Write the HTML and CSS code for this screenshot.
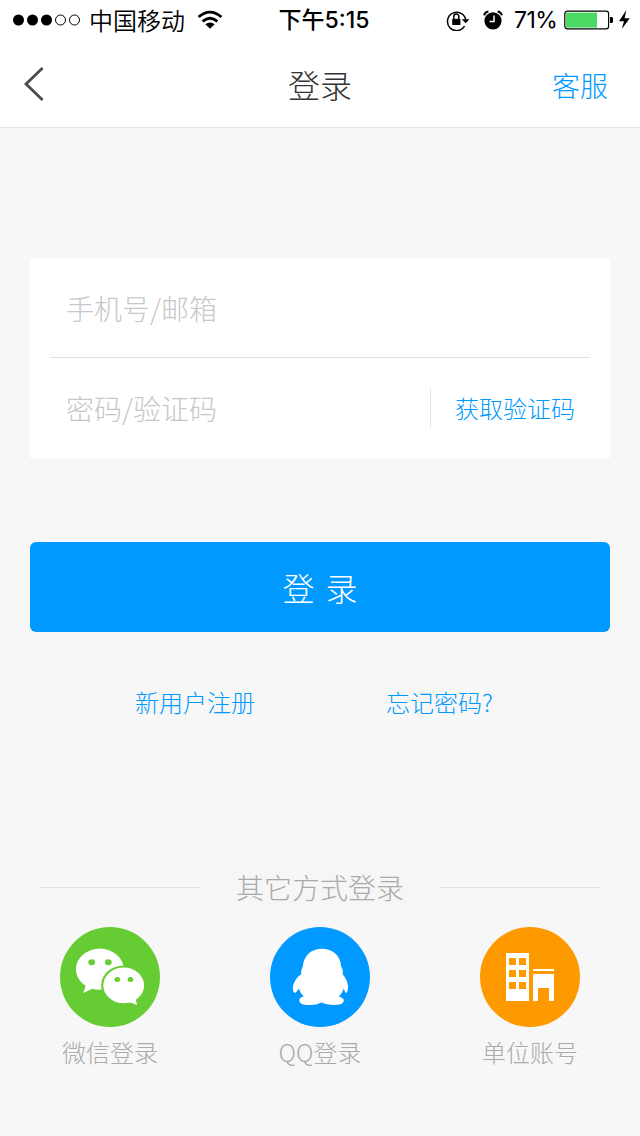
FILE: index.html
```html
<!DOCTYPE html>
<html lang="zh-CN">
    <head>
        <meta charset="utf-8">
        <title>登录</title>
        <link rel="stylesheet" href="styles.css">
    </head>
    <body>
        <div class="statusbar">
            <div class="carrier">
                <svg class="signal" width="70" height="14" viewBox="0 0 70 14">
                    <circle cx="6.5" cy="7" r="5.5" />
                    <circle cx="20.5" cy="7" r="5.5" />
                    <circle cx="34.5" cy="7" r="5.5" />
                    <circle class="off" cx="48.5" cy="7" r="5" />
                    <circle class="off" cx="62.5" cy="7" r="5" />
                </svg>
                <span class="operator">中国移动</span>
                <svg class="wifi" width="26" height="20" viewBox="0 0 26 20">
                    <path class="arc" d="M1.6 7Q13 -2.8 24.4 7M5.6 11.4Q13 5 20.4 11.4" />
                    <path d="M8.3 14.2Q13 10.6 17.7 14.2L13 18.8Z" />
                </svg>
            </div>
            <div class="clock">下午5:15</div>
            <div class="power">
                <svg class="lock" width="24" height="22" viewBox="0 0 24 22">
                    <path class="ring" d="M18.6 17.2A9.2 9.2 0 1 1 19.8 11" />
                    <path d="M15.8 10.2H23.4L19.6 14.2Z" />
                    <path d="M6.2 9.8H14.4V16H6.2Z" />
                    <path class="ring" d="M7.8 10V7.6A2.5 2.6 0 0 1 12.8 7.6V10" />
                </svg>
                <svg class="alarm" width="20" height="20" viewBox="0 0 20 20">
                    <circle cx="10" cy="10.8" r="8.6" />
                    <path class="bell" d="M1.2 5.4Q1.8 2.2 5.4 1.6M18.8 5.4Q18.2 2.2 14.6 1.6" />
                    <path class="hand" d="M11 5.4V11.6H6.6" />
                </svg>
                <span class="percent">71%</span>
                <svg class="battery" width="68" height="22" viewBox="0 0 68 22">
                    <rect class="case" x="0.8" y="2.2" width="43.8" height="17.6" rx="2.6" />
                    <rect class="level" x="2" y="3.6" width="31" height="15" />
                    <path d="M46 8H47.4Q49 8 49 9.4V12.6Q49 14 47.4 14H46Z" />
                    <path d="M62.4 1L55 12.2H60L57.8 20L65.8 9.2H60.6Z" />
                </svg>
            </div>
        </div>
        <div class="navbar">
            <a class="back" href="#">
                <svg width="22" height="36" viewBox="0 0 22 36">
                    <path d="M19.6 2L3 18L19.6 34" />
                </svg>
            </a>
            <div class="title">登录</div>
            <a class="service" href="#">客服</a>
        </div>
        <div class="form">
            <div class="field">
                <span class="placeholder">手机号/邮箱</span>
            </div>
            <div class="field">
                <span class="placeholder">密码/验证码</span>
                <a class="getcode" href="#">获取验证码</a>
            </div>
        </div>
        <a class="submit" href="#">登 录</a>
        <div class="links">
            <a href="#">新用户注册</a>
            <a href="#">忘记密码?</a>
        </div>
        <div class="divider">
            <span>其它方式登录</span>
        </div>
        <div class="others">
            <a class="other" href="#">
                <svg class="wechat" width="100" height="100" viewBox="0 0 100 100">
                    <circle cx="50" cy="50" r="50" />
                    <path class="shape" d="M26 58L23.3 66L33 61.4Z" />
                    <ellipse class="shape" cx="39.8" cy="42.2" rx="23.9" ry="20.6" />
                    <ellipse cx="63.7" cy="58.4" rx="22.6" ry="20" />
                    <ellipse class="shape" cx="63.7" cy="58.4" rx="20.4" ry="17.9" />
                    <path class="shape" d="M69 75L77 78L75.4 71Z" />
                    <ellipse cx="31.7" cy="35.2" rx="3.4" ry="3" />
                    <ellipse cx="48.3" cy="35.2" rx="3.4" ry="3" />
                    <ellipse cx="57.3" cy="52.6" rx="2.8" ry="2.5" />
                    <ellipse cx="70.5" cy="52.6" rx="2.8" ry="2.5" />
                </svg>
                <span>微信登录</span>
            </a>
            <a class="other" href="#">
                <svg class="qq" width="100" height="100" viewBox="0 0 100 100">
                    <circle cx="50" cy="50" r="50" />
                    <path class="shape" d="M51.8 21.8C62 21.8 70.4 28 71.2 39.5Q73.2 42 72.8 47.4C76 51 78 55.5 78 60Q77.8 65 76.4 65.8Q75 66 73.8 61.4Q72.4 66 68.8 69.4Q73.8 70.6 73.8 73.6C73.4 77.4 69 78 64 78Q56 77.6 51.6 75.5Q46 78.4 38.6 78C33 78 29.4 76.8 29.3 73.2Q29.4 70.2 33.8 69.4Q30.2 66 28.7 61.4Q26 66 24.7 65.8C22.4 65 22.8 60 23.4 57.5C24.8 53 27.5 49.5 31 47.4Q30.8 43 32.8 39.5C33.6 28.2 41.8 21.8 51.8 21.8Z" />
                </svg>
                <span>QQ登录</span>
            </a>
            <a class="other" href="#">
                <svg class="company" width="100" height="100" viewBox="0 0 100 100">
                    <circle cx="50" cy="50" r="50" />
                    <path class="shape" d="M26 26H49V74H26ZM53 42H74V44H53ZM53 47H74V74H69V61H58V74H53Z" />
                    <path d="M29 31H36V38H29ZM39 31H46V38H39ZM29 43H36V50H29ZM39 43H46V50H39ZM29 55H36V62H29ZM39 55H46V62H39Z" />
                </svg>
                <span>单位账号</span>
            </a>
        </div>
    </body>
</html>
```
FILE: styles.css
```css
*
{
    box-sizing:border-box;
}
body
{
    margin:0;
    min-height:1136px;
    background:#f7f7f7;
    color:#333;
    font-family:"Noto Sans CJK SC",sans-serif;
    font-weight:300;
}
a
{
    color:#0099ff;
    text-decoration:none;
}
svg
{
    display:block;
    flex:none;
}
.statusbar
{
    display:grid;
    grid-template-columns:240px 168px 1fr;
    height:40px;
    background:#fff;
    color:#000;
    font-size:24px;
    line-height:40px;
    font-weight:400;
}
.carrier
{
    display:flex;
    align-items:center;
    padding-left:12px;
}
.signal .off
{
    fill:none;
    stroke:#000;
}
.operator
{
    margin-left:7px;
    font-weight:350;
}
.wifi
{
    margin-left:12px;
}
.wifi .arc
{
    fill:none;
    stroke:#000;
    stroke-width:2.8;
}
.clock
{
    text-align:center;
    font-family:Inter,"Noto Sans CJK SC",sans-serif;
    font-weight:500;
    font-size:23px;
}
.power
{
    display:flex;
    align-items:center;
    padding-left:38px;
}
.lock .ring
{
    fill:none;
    stroke:#000;
    stroke-width:1.5;
}
.alarm
{
    margin-left:13px;
}
.alarm .bell
{
    fill:none;
    stroke:#000;
    stroke-width:2;
}
.alarm .hand
{
    fill:none;
    stroke:#fff;
    stroke-width:1.5;
}
.percent
{
    width:50px;
    padding-left:11px;
    font-family:Inter,sans-serif;
    font-size:23px;
    letter-spacing:-0.5px;
}
.battery
{
    margin-left:11px;
}
.battery .case
{
    fill:none;
    stroke:#000;
    stroke-width:1.2;
}
.battery .level
{
    fill:#4cd964;
}
.navbar
{
    display:grid;
    grid-template-columns:160px 320px 160px;
    align-items:center;
    height:88px;
    background:#fff;
    border-bottom:1px solid #e5e5e5;
}
.back
{
    padding-left:23px;
}
.back path
{
    fill:none;
    stroke:#4c4c4c;
    stroke-width:2.8;
}
.title
{
    text-align:center;
    font-size:32px;
}
.service
{
    padding:2px 32px 0 0;
    text-align:right;
    font-size:28px;
}
.form
{
    margin:130px 30px 0;
    padding:0 20px;
    background:#fff;
}
.field
{
    display:flex;
    align-items:center;
    justify-content:space-between;
    height:100px;
    padding-left:16px;
}
.field:first-child
{
    border-bottom:1px solid #e2e2e2;
}
.placeholder
{
    color:#c7c7cd;
    font-size:28px;
}
.getcode
{
    width:160px;
    height:40px;
    padding-left:24px;
    border-left:1px solid #e2e2e2;
    font-size:24px;
    line-height:40px;
}
.submit
{
    display:block;
    height:90px;
    margin:84px 30px 0;
    border-radius:6px;
    background:#0099ff;
    color:#fff;
    font-size:32px;
    line-height:90px;
    text-align:center;
    word-spacing:4px;
}
.links
{
    display:flex;
    gap:131px;
    margin-top:52px;
    padding-left:135px;
    font-size:24px;
    line-height:36px;
}
.divider
{
    display:flex;
    align-items:center;
    height:40px;
    margin:147px 40px 0;
    color:#aaa;
    font-size:28px;
}
.divider:before,
.divider:after
{
    content:"";
    flex:1;
    border-top:1px solid #e2e2e2;
}
.divider span
{
    width:240px;
    text-align:center;
    line-height:40px;
    background:#f6f6f6;
}
.others
{
    display:flex;
    justify-content:space-between;
    margin:20px 50px 0;
}
.other
{
    display:flex;
    flex-direction:column;
    align-items:center;
    width:120px;
    color:#aaa;
    font-size:24px;
    line-height:36px;
}
.other span
{
    margin-top:7px;
}
.wechat
{
    fill:#66cc33;
}
.qq
{
    fill:#0099ff;
}
.company
{
    fill:#ff9900;
}
.other .shape
{
    fill:#fff;
}
```
